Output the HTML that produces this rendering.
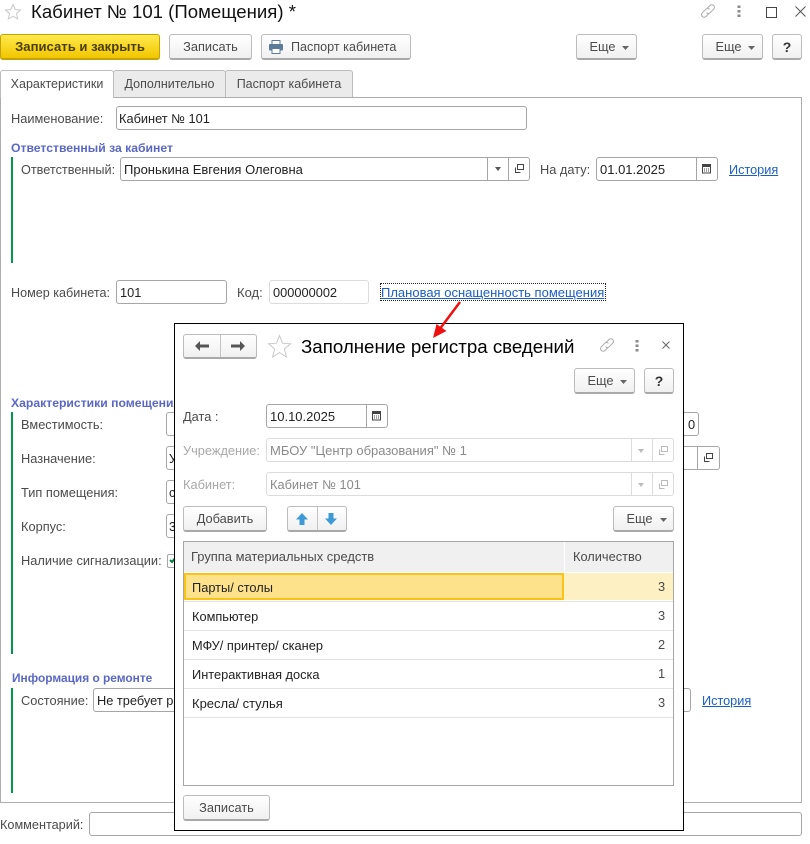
<!DOCTYPE html>
<html lang="ru"><head><meta charset="utf-8"><title>Кабинет № 101</title>
<style>
html,body{margin:0;padding:0;background:#fff}
#p{position:relative;width:810px;height:844px;overflow:hidden;background:#fff;font-family:"Liberation Sans",Arial,sans-serif;font-size:12.8px;color:#4b4b4b}
#p div,#p a,#p svg{position:absolute}
.t{white-space:nowrap;line-height:16px;height:16px}
.d{color:#222}
.g{color:#a8a8a8}
.s{font-weight:bold;color:#5a68c4;font-size:12.2px}
.l{color:#1a5fc4;text-decoration:underline;font-size:12.7px}
.i{box-sizing:border-box;border:1px solid #a6a6a6;border-radius:3px;background:#fff;height:24px}
.ig{box-sizing:border-box;border:1px solid #dcdcdc;border-radius:3px;background:#fff;height:24px}
.b{box-sizing:border-box;height:26px;border:1px solid #bcbcbc;border-bottom:2px solid #a9a9a9;border-radius:3px;background:linear-gradient(#ffffff,#f0f0f0);line-height:24px;text-align:center;white-space:nowrap;color:#4b4b4b}
.v{width:1px;background:#a6a6a6}
.vg{width:1px;background:#dcdcdc}
.bar{left:11px;width:2px;background:#00994d}
.h{height:1px;background:#e3e3e3;left:184px;width:489px}
.tab{box-sizing:border-box;top:70px;height:27px;border:1px solid #bcbcbc;border-bottom:none;background:#ebebeb;line-height:27px;text-align:center;border-radius:3px 3px 0 0;white-space:nowrap;font-size:12.5px}
</style></head><body><div id="p">

<svg style="left:4px;top:3px" width="18" height="18" viewBox="0 0 18 18"><path d="M9 1.500l2.200 5 5.300.5-4 3.600 1.200 5.400L9 13.200 4.300 16l1.200-5.400-4-3.600 5.300-.5z" fill="#fff" stroke="#c9c9c9"/></svg>
<div class="t" style="left:31px;top:1px;height:22px;line-height:22px;font-size:18.6px;color:#111">Кабинет № 101 (Помещения) *</div>

<svg style="left:699px;top:3px" width="18" height="16" viewBox="0 0 18 16" fill="none" stroke="#aaa" stroke-width="1"><path d="M8 5.500l3-3a2.600 2.600 0 0 1 3.700 3.700l-3.500 3.500a2.600 2.600 0 0 1-3.700 0"/><path d="M10 10.500l-3 3a2.600 2.600 0 0 1-3.700-3.700l3.500-3.500a2.600 2.600 0 0 1 3.700 0"/></svg>
<svg style="left:737px;top:5px" width="4" height="13" viewBox="0 0 4 13" fill="#8a8a8a"><rect x="0.500" y="0.500" width="3" height="2.500"/><rect x="0.500" y="5" width="3" height="2.500"/><rect x="0.500" y="9.500" width="3" height="2.500"/></svg>
<div style="left:766px;top:7px;width:9px;height:9px;border:1px solid #444"></div>
<svg style="left:795px;top:6px" width="11" height="11" viewBox="0 0 11 11" stroke="#555" fill="none"><path d="M.5.500l10 10M10.500.500l-10 10"/></svg>

<div class="b" style="left:0;top:34px;width:160px;background:linear-gradient(#ffe94d,#f2c600);border-color:#c4a300;color:#4a3f00;font-weight:bold;font-size:13.1px">Записать и закрыть</div>
<div class="b" style="left:169px;top:34px;width:83px">Записать</div>
<div class="b" style="left:261px;top:34px;width:150px"></div>
<div class="t" style="left:291px;top:39px;font-size:12.6px">Паспорт кабинета</div>
<svg style="left:268px;top:40px" width="16" height="14" viewBox="0 0 16 14"><rect x="4" y="0.500" width="8" height="4" fill="#fff" stroke="#5b7c99"/><rect x="1" y="4" width="14" height="6.500" rx="1" fill="#5b7c99"/><rect x="4" y="8.500" width="8" height="5" fill="#fff" stroke="#5b7c99"/></svg>
<div class="b" style="left:576px;top:34px;width:61px;padding-right:8px">Еще</div>
<svg style="left:622px;top:46px" width="7" height="4"><path d="M0 0h7L3.500 4z" fill="#666"/></svg>
<div class="b" style="left:702px;top:34px;width:61px;padding-right:8px">Еще</div>
<svg style="left:748px;top:46px" width="7" height="4"><path d="M0 0h7L3.500 4z" fill="#666"/></svg>
<div class="b" style="left:772px;top:34px;width:30px;font-size:14px;color:#333;font-weight:bold">?</div>

<div style="left:0;top:97px;width:802px;height:706px;box-sizing:border-box;border:1px solid #adadad"></div>
<div class="tab" style="left:0;width:114px;background:#fff;height:28px;z-index:2">Характеристики</div>
<div class="tab" style="left:113px;width:113px">Дополнительно</div>
<div class="tab" style="left:225px;width:128px">Паспорт кабинета</div>

<div class="t" style="left:11px;top:111px">Наименование:</div>
<div class="i" style="left:116px;top:106px;width:411px"></div>
<div class="t d" style="left:119px;top:111px">Кабинет № 101</div>

<div class="t s" style="left:11px;top:140px">Ответственный за кабинет</div>
<div class="bar" style="top:157px;height:106px"></div>
<div class="t" style="left:21px;top:162px;font-size:12.7px">Ответственный:</div>
<div class="i" style="left:120px;top:157px;width:410px"></div>
<div class="v" style="left:487px;top:158px;height:22px"></div>
<div class="v" style="left:508px;top:158px;height:22px"></div>
<div class="t d" style="left:124px;top:162px;font-size:13px">Пронькина Евгения Олеговна</div>
<svg style="left:495px;top:167px" width="6" height="4"><path d="M0 0h6L3 4z" fill="#555"/></svg>
<svg style="left:514px;top:163px" width="11" height="11" viewBox="0 0 11 11" fill="none" stroke="#444"><rect x="3.500" y="1.500" width="6" height="5"/><path d="M1.500 4.500v5h5"/></svg>
<div class="t" style="left:540px;top:162px">На дату:</div>
<div class="i" style="left:596px;top:157px;width:122px"></div>
<div class="v" style="left:696px;top:158px;height:22px"></div>
<div class="t d" style="left:600px;top:162px;font-size:13px">01.01.2025</div>
<svg style="left:701px;top:163px" width="12" height="11" viewBox="0 0 12 11"><rect x="1.500" y="1.500" width="8" height="8.500" fill="#fff" stroke="#444"/><rect x="1" y="1" width="9" height="3" fill="#444"/><path d="M3 6h1M5 6h1M7 6h1M3 8h1M5 8h1M7 8h1" stroke="#444"/></svg>
<a class="t l" style="left:729px;top:162px">История</a>

<div class="t" style="left:11px;top:285px;font-size:12.6px">Номер кабинета:</div>
<div class="i" style="left:116px;top:280px;width:111px"></div>
<div class="t d" style="left:120px;top:285px">101</div>
<div class="t" style="left:237px;top:285px;font-size:13px">Код:</div>
<div class="ig" style="left:269px;top:280px;width:100px"></div>
<div class="t d" style="left:273px;top:285px">000000002</div>
<div style="left:380px;top:283px;width:224px;height:16px;border:1px dotted #222"></div>
<a class="t l" style="left:381px;top:285px;font-size:13px">Плановая оснащенность помещения</a>

<div class="t s" style="left:11px;top:395px">Характеристики помещения</div>
<div class="bar" style="top:412px;height:242px"></div>
<div class="t" style="left:21px;top:417px">Вместимость:</div>
<div class="i" style="left:166px;top:412px;width:533px"></div>
<div class="t d" style="left:688px;top:417px">0</div>
<div class="t" style="left:21px;top:451px">Назначение:</div>
<div class="i" style="left:166px;top:446px;width:554px"></div>
<div class="v" style="left:697px;top:447px;height:22px"></div>
<svg style="left:703px;top:452px" width="11" height="11" viewBox="0 0 11 11" fill="none" stroke="#444"><rect x="3.500" y="1.500" width="6" height="5"/><path d="M1.500 4.500v5h5"/></svg>
<div class="t d" style="left:169px;top:451px">У</div>
<div class="t" style="left:21px;top:485px">Тип помещения:</div>
<div class="i" style="left:166px;top:480px;width:500px"></div>
<div class="t d" style="left:169px;top:485px">с</div>
<div class="t" style="left:21px;top:519px">Корпус:</div>
<div class="i" style="left:166px;top:514px;width:500px"></div>
<div class="t d" style="left:169px;top:519px">3</div>
<div class="t" style="left:21px;top:553px">Наличие сигнализации:</div>
<div style="left:167px;top:554px;width:12px;height:12px;border:1px solid #a6a6a6;border-radius:2px"></div>
<svg style="left:169px;top:556px" width="8" height="8" viewBox="0 0 8 8" fill="none" stroke="#00803c" stroke-width="2"><path d="M1 4l2 2 4-5"/></svg>

<div class="t s" style="left:12px;top:670px;font-size:11.9px">Информация о ремонте</div>
<div class="bar" style="top:688px;height:105px"></div>
<div class="t" style="left:21px;top:693px">Состояние:</div>
<div class="i" style="left:93px;top:688px;width:598px"></div>
<div class="t d" style="left:97px;top:693px">Не требует ремонта</div>
<a class="t l" style="left:702px;top:693px">История</a>

<div class="t" style="left:0;top:817px;font-size:12.7px">Комментарий:</div>
<div class="i" style="left:89px;top:812px;width:713px"></div>

<!-- dialog -->
<div style="left:174px;top:323px;width:510px;height:508px;box-sizing:border-box;border:1px solid #000;background:#fff"></div>

<div class="b" style="left:183px;top:334px;width:74px;height:25px"></div>
<div class="v" style="left:220px;top:335px;height:22px;background:#c4c4c4"></div>
<svg style="left:194px;top:340px" width="16" height="12" viewBox="0 0 16 12"><path d="M1 6l5-5v3.500h9v3H6V11z" fill="#555"/></svg>
<svg style="left:230px;top:340px" width="16" height="12" viewBox="0 0 16 12"><path d="M15 6l-5-5v3.500H1v3h9V11z" fill="#555"/></svg>
<svg style="left:267px;top:334px" width="25" height="24" viewBox="0 0 25 24"><path d="M12.500 1.500l3 7.700 8 .6-6.100 5.200 2 8-6.900-4.400L5.600 23l2-8L1.500 9.800l8-.6z" fill="#fff" stroke="#c9c9c9"/></svg>
<div class="t" style="left:301px;top:336px;height:22px;line-height:22px;font-size:18.72px;color:#000">Заполнение регистра сведений</div>
<svg style="left:598px;top:337px" width="18" height="16" viewBox="0 0 18 16" fill="none" stroke="#aaa" stroke-width="1"><path d="M8 5.500l3-3a2.600 2.600 0 0 1 3.700 3.700l-3.500 3.500a2.600 2.600 0 0 1-3.700 0"/><path d="M10 10.500l-3 3a2.600 2.600 0 0 1-3.700-3.700l3.500-3.500a2.600 2.600 0 0 1 3.700 0"/></svg>
<svg style="left:635px;top:340px" width="4" height="12" viewBox="0 0 4 12" fill="#8a8a8a"><rect x="0.500" y="0" width="3" height="2.500"/><rect x="0.500" y="4.500" width="3" height="2.500"/><rect x="0.500" y="9" width="3" height="2.500"/></svg>
<svg style="left:662px;top:341px" width="8" height="8" viewBox="0 0 8 8" stroke="#666" fill="none"><path d="M.5.500l7 7M7.500.500l-7 7"/></svg>

<div class="b" style="left:574px;top:368px;width:61px;padding-right:8px">Еще</div>
<svg style="left:620px;top:380px" width="7" height="4"><path d="M0 0h7L3.500 4z" fill="#666"/></svg>
<div class="b" style="left:644px;top:368px;width:30px;font-size:14px;color:#333;font-weight:bold">?</div>

<div class="t" style="left:183px;top:409px">Дата :</div>
<div class="i" style="left:266px;top:404px;width:122px"></div>
<div class="v" style="left:366px;top:405px;height:22px"></div>
<div class="t d" style="left:270px;top:409px;font-size:13px">10.10.2025</div>
<svg style="left:371px;top:410px" width="12" height="11" viewBox="0 0 12 11"><rect x="1.500" y="1.500" width="8" height="8.500" fill="#fff" stroke="#444"/><rect x="1" y="1" width="9" height="3" fill="#444"/><path d="M3 6h1M5 6h1M7 6h1M3 8h1M5 8h1M7 8h1" stroke="#444"/></svg>

<div class="t g" style="left:183px;top:443px">Учреждение:</div>
<div class="ig" style="left:266px;top:438px;width:408px"></div>
<div class="vg" style="left:631px;top:439px;height:22px"></div>
<div class="vg" style="left:652px;top:439px;height:22px"></div>
<div class="t" style="left:270px;top:443px;color:#8a8a8a;font-size:13px">МБОУ "Центр образования" № 1</div>
<svg style="left:638px;top:449px" width="6" height="4"><path d="M0 0h6L3 4z" fill="#bbb"/></svg>
<svg style="left:658px;top:445px" width="11" height="11" viewBox="0 0 11 11" fill="none" stroke="#bbb"><rect x="3.500" y="1.500" width="6" height="5"/><path d="M1.500 4.500v5h5"/></svg>

<div class="t g" style="left:183px;top:477px">Кабинет:</div>
<div class="ig" style="left:266px;top:472px;width:408px"></div>
<div class="vg" style="left:631px;top:473px;height:22px"></div>
<div class="vg" style="left:652px;top:473px;height:22px"></div>
<div class="t" style="left:270px;top:477px;color:#8a8a8a">Кабинет № 101</div>
<svg style="left:638px;top:483px" width="6" height="4"><path d="M0 0h6L3 4z" fill="#bbb"/></svg>
<svg style="left:658px;top:479px" width="11" height="11" viewBox="0 0 11 11" fill="none" stroke="#bbb"><rect x="3.500" y="1.500" width="6" height="5"/><path d="M1.500 4.500v5h5"/></svg>

<div class="b" style="left:183px;top:506px;width:84px">Добавить</div>
<div class="b" style="left:287px;top:506px;width:60px"></div>
<div class="v" style="left:317px;top:507px;height:23px;background:#c4c4c4"></div>
<svg style="left:295px;top:512px" width="14" height="14" viewBox="0 0 14 14"><path d="M7 1l6 6.500H9.500V13h-5V7.500H1z" fill="#3d9ad6"/></svg>
<svg style="left:324px;top:512px" width="14" height="14" viewBox="0 0 14 14"><path d="M7 13L1 6.500h3.500V1h5v5.500H13z" fill="#3d9ad6"/></svg>
<div class="b" style="left:613px;top:506px;width:61px;padding-right:8px">Еще</div>
<svg style="left:660px;top:518px" width="7" height="4"><path d="M0 0h7L3.500 4z" fill="#666"/></svg>

<div style="left:183px;top:541px;width:491px;height:245px;box-sizing:border-box;border:1px solid #a6a6a6"></div>
<div style="left:184px;top:542px;width:380px;height:30px;background:#f0f0f0"></div>
<div style="left:565px;top:542px;width:108px;height:30px;background:#f0f0f0"></div>
<div class="t" style="left:191px;top:549px;font-size:12.95px">Группа материальных средств</div>
<div class="t" style="left:573px;top:549px">Количество</div>
<div style="left:184px;top:573px;width:380px;height:27px;box-sizing:border-box;background:#fde28b;border:2px solid #fbc318"></div>
<div style="left:564px;top:573px;width:109px;height:27px;background:#fdf1c4"></div>
<div class="h" style="top:601px"></div><div class="h" style="top:630px"></div><div class="h" style="top:659px"></div><div class="h" style="top:688px"></div><div class="h" style="top:717px"></div>
<div class="t d" style="left:192px;top:580px">Парты/ столы</div>
<div class="t d" style="left:192px;top:609px">Компьютер</div>
<div class="t d" style="left:192px;top:638px">МФУ/ принтер/ сканер</div>
<div class="t d" style="left:192px;top:667px">Интерактивная доска</div>
<div class="t d" style="left:192px;top:696px;font-size:13px">Кресла/ стулья</div>
<div class="t" style="left:658px;top:579px">3</div>
<div class="t" style="left:658px;top:608px">3</div>
<div class="t" style="left:658px;top:637px">2</div>
<div class="t" style="left:658px;top:666px">1</div>
<div class="t" style="left:658px;top:695px">3</div>

<div class="b" style="left:183px;top:795px;width:87px">Записать</div>

<svg style="left:425px;top:298px;z-index:5" width="45" height="45" viewBox="0 0 45 45"><path d="M35 4L14 32" stroke="#f01010" stroke-width="2.500" fill="none"/><path d="M8 40l3.500-14 10 7z" fill="#f01010"/></svg>

</div></body></html>
